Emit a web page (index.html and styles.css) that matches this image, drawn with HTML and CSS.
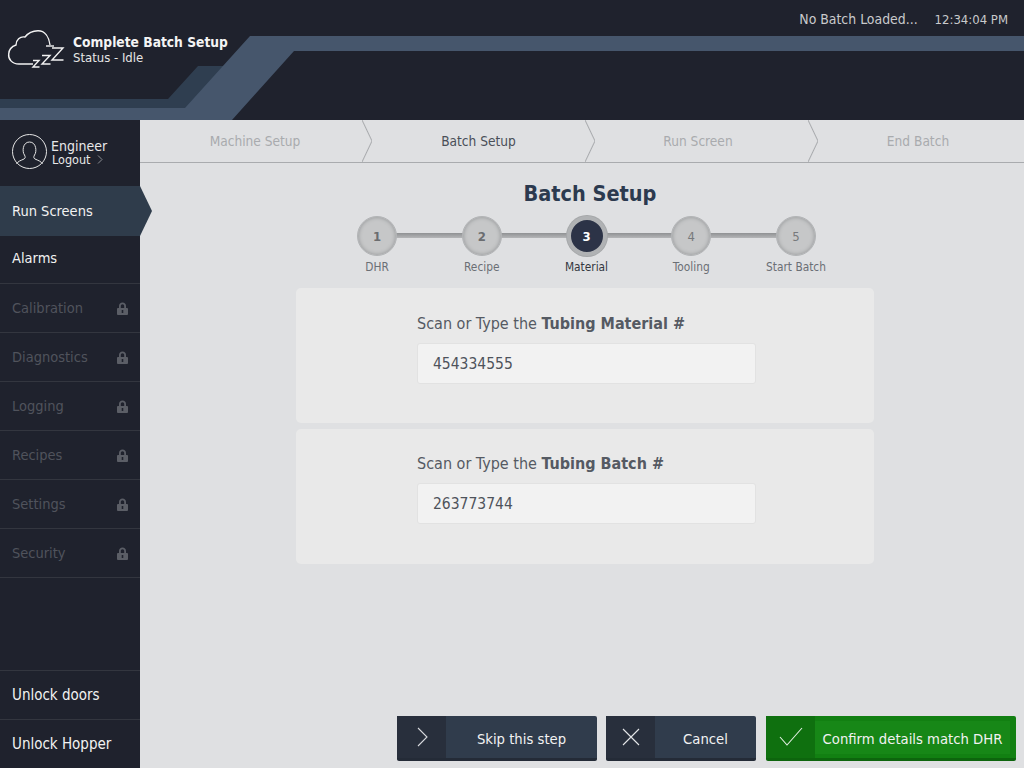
FILE: index.html

```html
<!DOCTYPE html>
<html>
  <head>
    <meta charset="utf-8">
    <title>Batch Setup</title>
    <link rel="stylesheet" href="styles.css">
  </head>
  <body>
    <!-- padlock used by the locked menu items -->
    <svg class="defs" width="0" height="0">
      <symbol id="lock" viewBox="0 0 11 13">
        <path fill="#5b5e66" fill-rule="evenodd" d="M2 6V4C2 2 3.500 0.500 5.500 0.500C7.500 0.500 9 2 9 4V6H10C10.500 6 11 6.500 11 7V12C11 12.500 10.500 13 10 13H1C0.500 13 0 12.500 0 12V7C0 6.500 0.500 6 1 6ZM3.800 6H7.200V4C7.200 3 6.500 2.300 5.500 2.300C4.500 2.300 3.800 3 3.800 4ZM4.700 8V11H6.300V8Z"/>
      </symbol>
    </svg>

    <header class="topbar">
      <!-- swoosh behind the header -->
      <svg class="swoosh" width="1024" height="120" viewBox="0 0 1024 120">
        <polygon fill="#2f3e50" points="0,99 168,99 198,66 230,66 190,108 0,108"/>
        <polygon fill="#46566c" points="0,108 185,108 250,36 1024,36 1024,51 294,51 232,120 0,120"/>
      </svg>
      <div class="brand">
        <svg class="cloud" width="60" height="44" viewBox="0 0 60 44" fill="none" stroke="#f2f2f2" stroke-width="1.4">
          <path d="M25 34H11C4 34 0 29 0.7 24C1 19 5 16 8 15C8 10 12 6 17 7C20 3 25 0.7 30 0.7C37 0.7 41 7 42 15"/>
          <path d="M38 16H46"/>
          <polyline points="25,30.5 31,30.5 25,37 31.5,37"/>
          <polyline points="34,25.5 42,25.5 34,34 42.5,34"/>
          <polyline points="44,18 55,18 44,30 55.5,30"/>
        </svg>
        <div class="brand-text">
          <div class="brand-title">Complete Batch Setup</div>
          <div class="brand-status">Status - Idle</div>
        </div>
      </div>
      <div class="topinfo">
        <span>No Batch Loaded...</span>
        <span class="clock">12:34:04 PM</span>
      </div>
    </header>

    <div class="layout">
      <nav class="sidebar">
        <div class="user">
          <svg width="35" height="35" viewBox="0 0 35 35" fill="none" stroke="#e4e4e4" stroke-width="1">
            <circle cx="17.5" cy="17.5" r="17"/>
            <path d="M12.5 21C10 18 10.5 8 17.5 8C24.5 8 25 18 22.5 21C21.5 23 21.5 24 23 25C26 26.5 29 27 30.5 30"/>
            <path d="M12.5 21C13.5 23 13.5 24 12 25C9 26.5 6 27 4.5 30"/>
          </svg>
          <div>
            <div class="user-name">Engineer</div>
            <div class="user-logout">Logout
              <svg class="logout-arrow" width="6" height="9" viewBox="0 0 6 9" fill="none" stroke="#8a8c92"><polyline points="1,0.5 5,4.5 1,8.5"/></svg>
            </div>
          </div>
        </div>
        <a class="nav-item active">Run Screens</a>
        <a class="nav-item">Alarms</a>
        <a class="nav-item locked">Calibration <svg class="lock" width="11" height="13"><use href="#lock"/></svg></a>
        <a class="nav-item locked">Diagnostics <svg class="lock" width="11" height="13"><use href="#lock"/></svg></a>
        <a class="nav-item locked">Logging <svg class="lock" width="11" height="13"><use href="#lock"/></svg></a>
        <a class="nav-item locked">Recipes <svg class="lock" width="11" height="13"><use href="#lock"/></svg></a>
        <a class="nav-item locked">Settings <svg class="lock" width="11" height="13"><use href="#lock"/></svg></a>
        <a class="nav-item locked">Security <svg class="lock" width="11" height="13"><use href="#lock"/></svg></a>
        <div class="nav-bottom">
          <a class="nav-item">Unlock doors</a>
          <a class="nav-item">Unlock Hopper</a>
        </div>
      </nav>

      <main class="content">
        <div class="tabs">
          <div class="tab tab-1">Machine Setup</div>
          <div class="tab tab-2 current">Batch Setup</div>
          <div class="tab tab-3">Run Screen</div>
          <div class="tab tab-4">End Batch</div>
        </div>

        <h1 class="page-title">Batch Setup</h1>

        <div class="steps">
          <div class="step"><div class="dot bold">1</div><div class="step-label">DHR</div></div>
          <div class="step"><div class="dot bold">2</div><div class="step-label">Recipe</div></div>
          <div class="step on"><div class="dot bold">3</div><div class="step-label">Material</div></div>
          <div class="step"><div class="dot">4</div><div class="step-label">Tooling</div></div>
          <div class="step"><div class="dot">5</div><div class="step-label">Start Batch</div></div>
        </div>

        <section class="card">
          <label class="field-label" for="material">Scan or Type the <b>Tubing Material #</b></label>
          <input class="field" id="material" type="text" value="454334555">
        </section>
        <section class="card">
          <label class="field-label" for="batch">Scan or Type the <b>Tubing Batch #</b></label>
          <input class="field" id="batch" type="text" value="263773744">
        </section>

        <div class="actions">
          <button class="btn btn-skip">
            <span class="btn-icon"><svg width="14" height="20" viewBox="0 0 14 20" fill="none" stroke="#d8dade" stroke-width="1.1"><polyline points="3,1 12,10 3,19"/></svg></span>
            <span class="btn-text">Skip this step</span>
          </button>
          <button class="btn btn-cancel">
            <span class="btn-icon"><svg width="20" height="20" viewBox="0 0 20 20" fill="none" stroke="#e4e6e8" stroke-width="1.1"><path d="M2 2L18 18M18 2L2 18"/></svg></span>
            <span class="btn-text">Cancel</span>
          </button>
          <button class="btn btn-confirm">
            <span class="btn-icon"><svg width="26" height="20" viewBox="0 0 26 20" fill="none" stroke="#e4efe4" stroke-width="1.1"><polyline points="2,10 9,18 24,1"/></svg></span>
            <span class="btn-text">Confirm details match DHR</span>
          </button>
        </div>
      </main>
    </div>
  </body>
</html>
```

FILE: styles.css

```css
* {
  box-sizing: border-box;
}
html, body {
  margin: 0;
  height: 100%;
  overflow: hidden;
}
body {
  width: 1024px;
  height: 768px;
  background-color: #1f222d;
  font-family: "DejaVu Sans", sans-serif;
  font-stretch: condensed;
  display: flex;
  flex-direction: column;
}
.defs {
  position: absolute;
}

/* header */
.topbar {
  position: relative;
  height: 120px;
  flex: none;
  padding: 30px 16px 0 8px;
  display: flex;
  justify-content: space-between;
  align-items: flex-start;
}
.swoosh {
  position: absolute;
  left: 0;
  top: 0;
}
.brand {
  position: relative;
  display: flex;
  gap: 5px;
}
.cloud {
  overflow: visible;
}
.brand-title {
  margin-top: 4px;
  font-size: 13.7px;
  font-weight: bold;
  color: #f4f4f4;
}
.brand-status {
  font-size: 13px;
  color: #e6e6e6;
}
.topinfo {
  position: relative;
  margin-top: -19px;
  display: flex;
  align-items: center;
  gap: 17px;
  font-size: 13.9px;
  color: #c9cacc;
}
.clock {
  font-size: 13px;
}

/* sidebar */
.layout {
  flex: 1;
  display: flex;
  min-height: 0;
}
.sidebar {
  width: 140px;
  flex: none;
  display: flex;
  flex-direction: column;
}
.user {
  height: 66px;
  padding: 14px 0 0 12px;
  display: flex;
  gap: 4px;
  color: #e8e8e8;
}
.user-name {
  margin-top: 4px;
  font-size: 14px;
  line-height: 16px;
}
.user-logout {
  font-size: 12.5px;
  line-height: 12px;
  margin-left: 1px;
}
.logout-arrow {
  margin-left: 3px;
}
.nav-item {
  position: relative;
  height: 49px;
  padding: 0 12px;
  display: flex;
  align-items: center;
  justify-content: space-between;
  font-size: 14.5px;
  color: #f2f2f2;
  border-bottom: 1px solid #33363f;
}
.nav-item.active {
  height: 50px;
  background-color: #2f3c4b;
  border-bottom: none;
}
.nav-item.active::after {
  content: "";
  position: absolute;
  left: 140px;
  top: 0;
  border-left: 12px solid #2f3c4b;
  border-top: 25px solid transparent;
  border-bottom: 25px solid transparent;
}
.nav-item.active + .nav-item {
  height: 48px;
  padding-bottom: 3px;
}
.nav-item.locked {
  color: #50535c;
}
.nav-bottom {
  margin-top: auto;
  border-top: 1px solid #33363f;
}
.nav-bottom .nav-item {
  font-size: 15px;
}
.nav-bottom .nav-item:last-child {
  height: 48px;
  border-bottom: none;
}

/* main area */
.content {
  flex: 1;
  min-width: 0;
  background-color: #dfe0e2;
  display: flex;
  flex-direction: column;
  align-items: center;
}
.tabs {
  width: 100%;
  height: 43px;
  flex: none;
  display: flex;
  border-bottom: 1px solid #a9abae;
}
.tab {
  position: relative;
  display: flex;
  align-items: center;
  justify-content: center;
  font-size: 13.6px;
  color: #a9abae;
}
.tab-1 { width: 230px; }
.tab-2 { width: 223px; padding-right: 6px; }
.tab-3 { width: 223px; padding-right: 13px; }
.tab-4 { flex: 1; padding-right: 4px; }
.tab.current {
  color: #4a4f58;
}
/* chevron between tabs */
.tab:not(.tab-4)::after {
  content: "";
  position: absolute;
  right: -2px;
  top: 0;
  width: 10px;
  height: 42px;
  background: linear-gradient(to top right, transparent calc(50% - 1px), #a9abae 50%, transparent calc(50% + 1px)) top / 100% 50% no-repeat,
    linear-gradient(to bottom right, transparent calc(50% - 1px), #a9abae 50%, transparent calc(50% + 1px)) bottom / 100% 50% no-repeat;
}
.page-title {
  margin: 17px 0 0 16px;
  font-size: 21.5px;
  line-height: 27px;
  font-weight: bold;
  color: #2c3a4f;
}
.steps {
  position: relative;
  margin-top: 9px;
  margin-left: 9px;
  display: flex;
  width: 489px;
  justify-content: space-between;
}
/* line joining the circles */
.steps::before {
  content: "";
  position: absolute;
  left: 50px;
  right: 50px;
  top: 17px;
  height: 5px;
  background: linear-gradient(#8f9193, #b5b6b8);
}
.step {
  position: relative;
  width: 70px;
  display: flex;
  flex-direction: column;
  align-items: center;
}
.dot {
  width: 40px;
  height: 40px;
  border-radius: 50%;
  background-color: #c6c7c8;
  box-shadow: inset 0 0 4px #8f9193;
  border: 1px solid #b2b4b6;
  display: flex;
  align-items: center;
  justify-content: center;
  font-size: 13px;
  color: #77797c;
}
.dot.bold {
  font-weight: bold;
  color: #6b6d70;
}
.step.on .dot {
  background-color: #2c3347;
  border: 4px solid #b0b2b4;
  box-shadow: 0 0 0 1px #a5a7a9;
  color: #fff;
}
.step-label {
  margin-top: 3px;
  font-size: 11.8px;
  line-height: 16px;
  color: #6b6f75;
  white-space: nowrap;
}
.step.on .step-label {
  color: #33373f;
}
.card {
  width: 578px;
  height: 135px;
  margin-left: 6px;
  padding: 27px 0 0 121px;
  flex: none;
  background-color: #e9e9e9;
  border-radius: 5px;
}
.steps + .card {
  margin-top: 13px;
}
.card + .card {
  margin-top: 6px;
  padding-top: 26px;
}
.field-label {
  display: block;
  font-size: 16px;
  line-height: 18px;
  color: #555a63;
}
.field {
  display: block;
  width: 339px;
  height: 41px;
  margin-top: 10px;
  padding: 0 15px;
  background-color: #f2f2f2;
  border: 1px solid #e2e2e2;
  border-radius: 3px;
  font-family: inherit;
  font-stretch: condensed;
  font-size: 15.5px;
  color: #4e535b;
  outline: none;
}

/* bottom buttons */
.actions {
  margin-top: auto;
  margin-bottom: 7px;
  align-self: flex-end;
  padding-right: 8px;
  display: flex;
  gap: 9px;
}
.btn {
  height: 45px;
  padding: 0;
  display: flex;
  border: none;
  border-bottom: 3px solid #242b37;
  border-radius: 2px;
  background-color: #303c4c;
  color: #f2f2f2;
  font-family: inherit;
  font-stretch: condensed;
  font-size: 14.7px;
}
.btn-icon {
  width: 49px;
  height: 100%;
  flex: none;
  display: flex;
  align-items: center;
  justify-content: center;
  background-color: #282f3c;
}
.btn-text {
  flex: 1;
  align-self: center;
  padding-top: 2px;
  text-align: center;
}
.btn-skip { width: 200px; }
.btn-cancel { width: 150px; }
.btn-confirm {
  width: 250px;
  margin-left: 1px;
  background-color: #128012;
  border-bottom-color: #0d650d;
}
.btn-confirm .btn-icon {
  background-color: #0f700f;
}
.btn-confirm .btn-text {
  margin-right: 6px;
  padding: 9px 0 7px;
  background-color: #178717;
}
```
